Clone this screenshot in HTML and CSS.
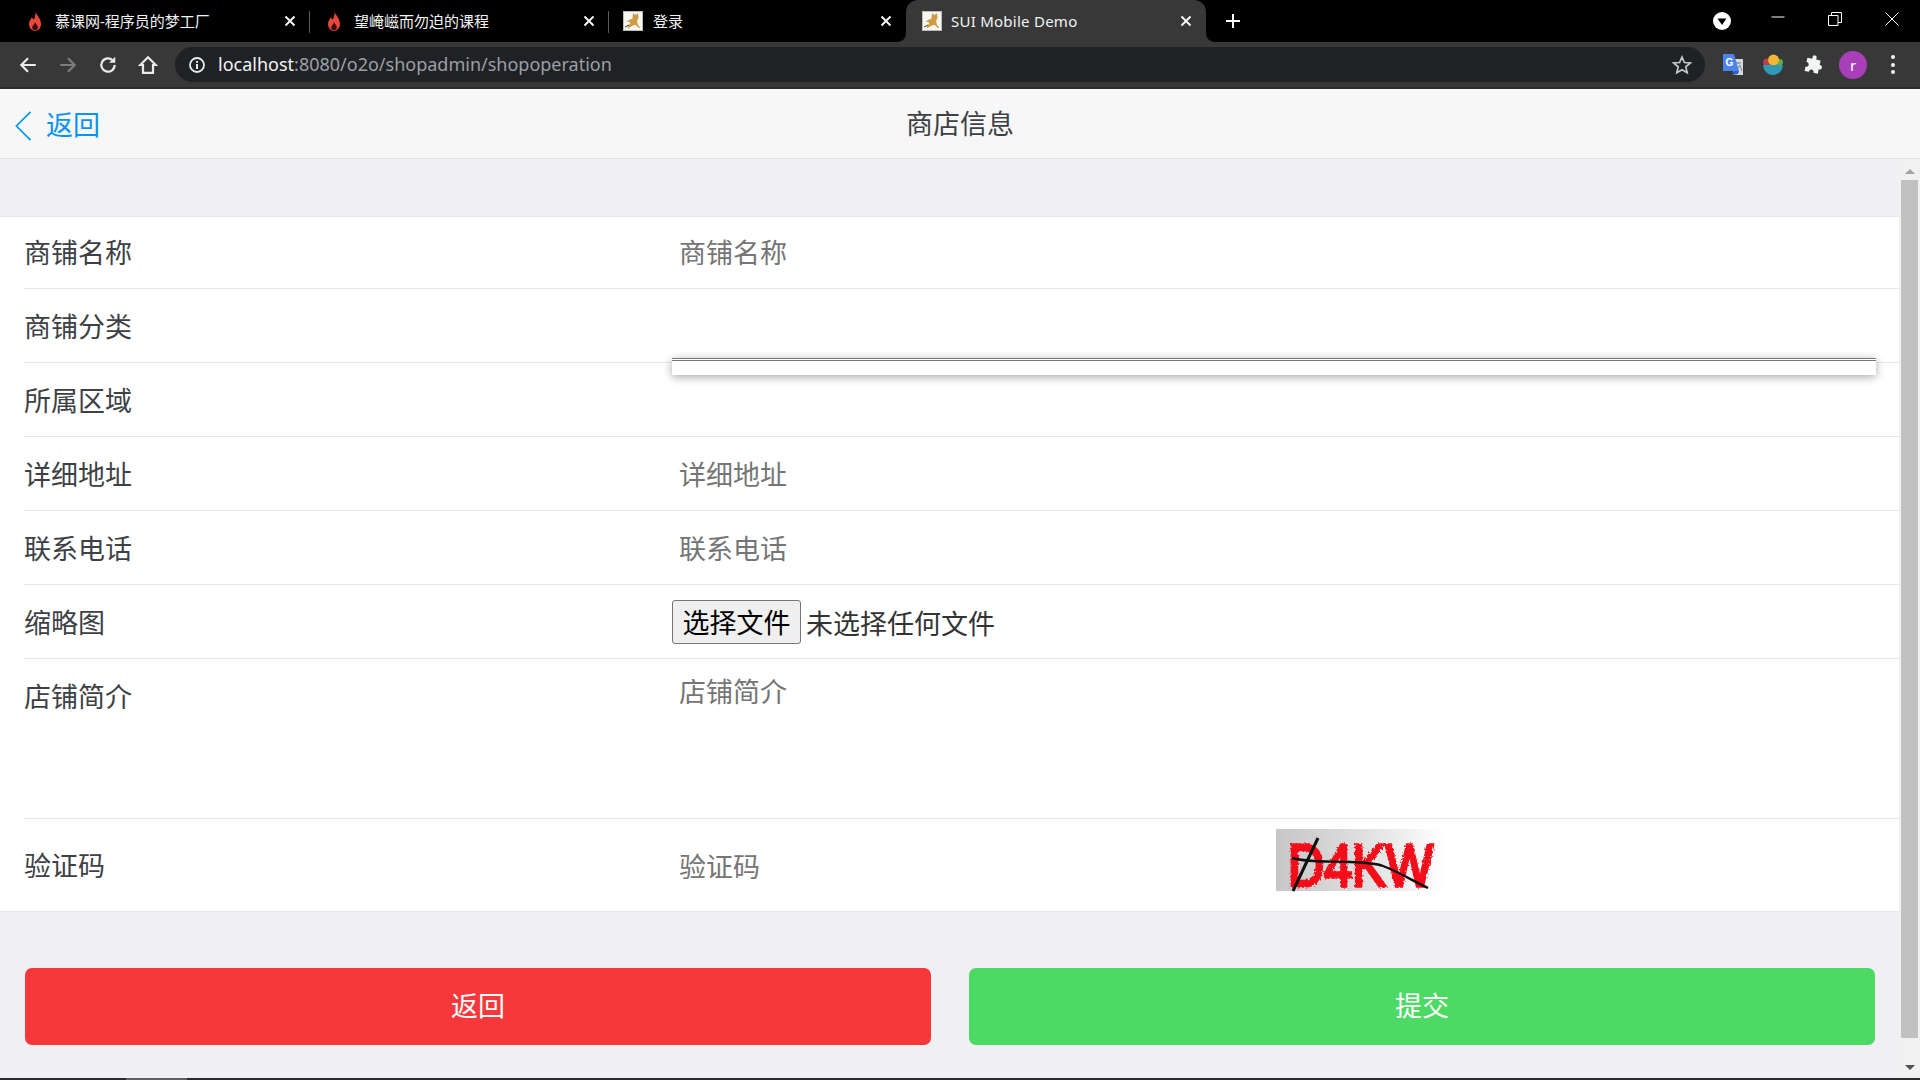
FILE: index.html
```html
<!DOCTYPE html>
<html lang="zh-CN">
<head>
<meta charset="utf-8">
<title>SUI Mobile Demo</title>
<link rel="stylesheet" href="styles.css">
</head>
<body>
<div class="browser-tabs">
  <div class="tab">
    <svg class="fav" viewBox="0 0 12 20"><path d="M6.500 0C7 4 12 7 12 13c0 4-3 7-6 7s-6-3-6-7c0-3 2-5 3-7 .5 1.500 1 2 2 2.500C6 6 7 3 6.500 0z" fill="#e8473d"/><path d="M6 11c1 2 2.800 3.500 2.800 5.500 0 1.500-1.200 2.700-2.800 2.700s-2.800-1.200-2.800-2.700C3.200 14.500 5.500 13.500 6 11z" fill="#3a0d0b"/></svg>
    <span class="tab-title">慕课网-程序员的梦工厂</span>
    <svg class="x" viewBox="0 0 12 12"><path d="M1.500 1.500l9 9M10.500 1.500l-9 9"/></svg>
    <i class="sep"></i>
  </div>
  <div class="tab">
    <svg class="fav" viewBox="0 0 12 20"><path d="M6.500 0C7 4 12 7 12 13c0 4-3 7-6 7s-6-3-6-7c0-3 2-5 3-7 .5 1.500 1 2 2 2.500C6 6 7 3 6.500 0z" fill="#e8473d"/><path d="M6 11c1 2 2.800 3.500 2.800 5.500 0 1.500-1.200 2.700-2.800 2.700s-2.800-1.200-2.800-2.700C3.200 14.500 5.500 13.500 6 11z" fill="#3a0d0b"/></svg>
    <span class="tab-title">望崦嵫而勿迫的课程</span>
    <svg class="x" viewBox="0 0 12 12"><path d="M1.500 1.500l9 9M10.500 1.500l-9 9"/></svg>
    <i class="sep"></i>
  </div>
  <div class="tab tab-login">
    <svg class="cat" viewBox="0 0 20 20"><rect x=".5" y=".5" width="19" height="19" fill="#f7f7f2" stroke="#bbb"/><path d="M10 2l1.500 1.500h2L15 2l.5 5-1.500 3 1 4 2.500 3-2-.3-3-3-3 1-5 3 1-3 2-3c-1-1-2.500-1-4-1 2-1.500 4-3 6-3z" fill="#cf9b45"/><path d="M2 16l4-2M11 6.500h.1M13.500 6.500h.1" stroke="#3a3a3a" fill="none"/></svg>
    <span class="tab-title">登录</span>
    <svg class="x" viewBox="0 0 12 12"><path d="M1.500 1.500l9 9M10.500 1.500l-9 9"/></svg>
  </div>
  <div class="tab tab-active">
    <svg class="cat" viewBox="0 0 20 20"><rect x=".5" y=".5" width="19" height="19" fill="#f7f7f2" stroke="#bbb"/><path d="M10 2l1.500 1.500h2L15 2l.5 5-1.500 3 1 4 2.500 3-2-.3-3-3-3 1-5 3 1-3 2-3c-1-1-2.500-1-4-1 2-1.500 4-3 6-3z" fill="#cf9b45"/><path d="M2 16l4-2M11 6.500h.1M13.500 6.500h.1" stroke="#3a3a3a" fill="none"/></svg>
    <span class="tab-title">SUI Mobile Demo</span>
    <svg class="x" viewBox="0 0 12 12"><path d="M1.500 1.500l9 9M10.500 1.500l-9 9"/></svg>
  </div>
  <svg class="new-tab" viewBox="0 0 16 16"><path d="M8 1v14M1 8h14"/></svg>
  <div class="win">
    <svg class="profile" viewBox="0 0 18 18"><circle cx="9" cy="9" r="9" fill="#fff"/><path d="M4.500 6.500h9L9 13z" fill="#000"/></svg>
    <svg class="win-btn" viewBox="0 0 14 14"><path d="M.5 5h13" stroke="#fff" fill="none"/></svg>
    <svg class="win-btn" viewBox="0 0 14 14"><path d="M.5 3.500h9.500v10H.5zM3.500 3.500V.5h10v10h-3.500" stroke="#fff" fill="none"/></svg>
    <svg class="win-btn" viewBox="0 0 14 14"><path d="M.5.5l13 13M13.500.5l-13 13" stroke="#fff" fill="none"/></svg>
  </div>
</div>

<div class="toolbar">
  <div class="tool"><svg viewBox="0 0 18 18" class="ico"><path d="M16 9H3M9 3L3 9l6 6" stroke="#e8eaed" stroke-width="2" fill="none"/></svg></div>
  <div class="tool"><svg viewBox="0 0 18 18" class="ico"><path d="M2 9h13M9 3l6 6-6 6" stroke="#7c7d7f" stroke-width="2" fill="none"/></svg></div>
  <div class="tool"><svg viewBox="0 0 18 18" class="ico"><path d="M15 9a6 6 0 1 1-1.800-4.300" stroke="#e8eaed" stroke-width="2" fill="none"/><path d="M15.500 1.500v5.500H10z" fill="#e8eaed"/></svg></div>
  <div class="tool"><svg viewBox="0 0 18 18" class="ico"><path d="M9 2L2 9h2.500v7h9V9H16z" stroke="#e8eaed" stroke-width="2" fill="none"/></svg></div>
  <div class="omni">
    <svg class="info" viewBox="0 0 18 18"><circle cx="9" cy="9" r="7" stroke="#e8eaed" stroke-width="1.800" fill="none"/><path d="M9 8v5M9 5v1.800" stroke="#e8eaed" stroke-width="2"/></svg>
    <span class="url"><b class="host">localhost</b>:8080/o2o/shopadmin/shopoperation</span>
    <svg class="star" viewBox="0 0 20 20"><path d="M10 2l2.400 5.500 6 .5-4.600 3.900 1.400 5.900L10 14.700l-5.200 3.100 1.400-5.900L1.600 8l6-.5z" stroke="#c4c6c9" stroke-width="1.700" fill="none"/></svg>
  </div>
  <div class="tool"><svg viewBox="0 0 22 22" class="ext"><path d="M9 5h12v16H12z" fill="#d5d8dc"/><path d="M13 9h6M16 8v2M14 17l4-6 2 6" stroke="#7d8b94" fill="none"/><path d="M1 0h11l5 17H1z" fill="#4a84ec"/><path d="M12 17l-2 4 6-1 1-3z" fill="#2e5fc0"/><text x="3.500" y="12" class="g">G</text></svg></div>
  <div class="tool"><svg viewBox="0 0 20 20" class="ext"><circle cx="4.500" cy="7.500" r="3.500" fill="#b8414a"/><circle cx="16" cy="7.500" r="3" fill="#63ac4c"/><circle cx="10.500" cy="5.500" r="5" fill="#f2b632"/><path d="M1 10h18c0 5-4 9-9 9s-9-4-9-9z" fill="#2f9ab8"/></svg></div>
  <div class="tool"><svg viewBox="0 0 20 20" class="ico"><path d="M8 1.500a2.200 2.200 0 0 1 4 0V4h4.500v4.500a2.300 2.300 0 1 1 0 4.500v4.500H12a2.300 2.300 0 1 0-4.500 0H3V13a2.300 2.300 0 1 0 0-4.500V4h5z" fill="#f1f3f4" transform="rotate(12 10 10)"/></svg></div>
  <div class="tool"><span class="avatar">r</span></div>
  <div class="tool"><span class="kebab"><i></i><i></i><i></i></span></div>
</div>

<header class="nav">
  <a class="nav-back"><svg class="chev" viewBox="0 0 18 32"><path d="M16.500 1L1.500 16l15 15" fill="none" stroke="#0894ec" stroke-width="1.800"/></svg><span>返回</span></a>
  <h1 class="nav-title">商店信息</h1>
</header>

<div class="viewport">
  <main class="content">
    <section class="list">
      <div class="row row-first"><label class="lbl">商铺名称</label><div class="ctl"><span class="ph">商铺名称</span></div></div>
      <div class="row"><label class="lbl">商铺分类</label><div class="ctl"></div></div>
      <div class="row"><label class="lbl">所属区域</label><div class="ctl"></div></div>
      <div class="row"><label class="lbl">详细地址</label><div class="ctl"><span class="ph">详细地址</span></div></div>
      <div class="row"><label class="lbl">联系电话</label><div class="ctl"><span class="ph">联系电话</span></div></div>
      <div class="row"><label class="lbl">缩略图</label><div class="ctl ctl-file"><button class="file-btn" type="button">选择文件</button><span class="file-none">未选择任何文件</span></div></div>
      <div class="row row-area"><label class="lbl">店铺简介</label><div class="ctl"><span class="ph">店铺简介</span></div></div>
      <div class="row row-code"><label class="lbl">验证码</label><div class="ctl ctl-half"><span class="ph">验证码</span></div>
        <svg class="captcha" viewBox="0 0 169 62" preserveAspectRatio="none">
          <defs>
            <linearGradient id="cg" x1="0" x2="1" y1="0" y2="0"><stop offset="0" stop-color="#c6c6c6"/><stop offset=".5" stop-color="#dedede"/><stop offset="1" stop-color="#ffffff"/></linearGradient>
            <filter id="soft" x="-5%" y="-5%" width="110%" height="110%"><feTurbulence type="fractalNoise" baseFrequency=".5" numOctaves="2" seed="4" result="n"/><feDisplacementMap in="SourceGraphic" in2="n" scale="4" result="d"/><feGaussianBlur in="d" stdDeviation=".6"/></filter>
          </defs>
          <rect width="169" height="62" fill="url(#cg)"/>
          <text x="12" y="57" class="cap-text" textLength="145" lengthAdjust="spacingAndGlyphs" filter="url(#soft)">D4KW</text>
          <path d="M42 9L17 62" stroke="#111" stroke-width="3" fill="none"/>
          <path d="M16 29c18 5 40 3 58 4 14 .5 25 1 33 4 16 6 30 15 45 22" stroke="#111" stroke-width="2.400" fill="none"/>
        </svg>
      </div>
      <div class="popover"></div>
    </section>
    <div class="actions">
      <a class="btn btn-red">返回</a>
      <a class="btn btn-green">提交</a>
    </div>
  </main>
  <aside class="scrollbar">
    <i class="arrow arrow-up"></i>
    <div class="thumb"></div>
    <i class="arrow arrow-down"></i>
  </aside>
</div>
<div class="taskbar"><i class="task-a"></i></div>
</body>
</html>
```

FILE: styles.css
```css
* { box-sizing: border-box; }
html, body { margin: 0; padding: 0; height: 100%; overflow: hidden; }
body {
  width: 1920px; height: 1080px; display: flex; flex-direction: column;
  font-family: "Noto Sans CJK SC", "Liberation Sans", sans-serif;
  color: #3d4145; background: #efeff4;
}

/* browser tabs */
.browser-tabs { height: 42px; background: #000; display: flex; align-items: stretch; flex: none; }
.tab { width: 299px; position: relative; display: flex; align-items: center; padding: 0 14px 0 18px; color: #f1f3f4; font-size: 15px; }
.tab:first-child { width: 310px; padding-left: 29px; }
.tab-login { width: 297px; padding-left: 14px; }
.tab-active { background: #383838; width: 300px; border-radius: 12px 12px 0 0; padding-left: 16px; padding-right: 14px; }
.tab-active::before, .tab-active::after { content: ""; position: absolute; bottom: 0; width: 8px; height: 8px; }
.tab-active::before { left: -8px; background: radial-gradient(circle at 0 0, #000 7.500px, #383838 8px); }
.tab-active::after { right: -8px; background: radial-gradient(circle at 100% 0, #000 7.500px, #383838 8px); }
.tab-title { flex: 1; margin: -2px 0 0 14px; white-space: nowrap; font-family: "Noto Sans", "Noto Sans CJK SC", sans-serif; }
.tab-login .tab-title { margin-left: 10px; }
.tab-active .tab-title { margin-left: 9px; margin-top: 0; letter-spacing: .25px; }
.fav { width: 12px; height: 20px; flex: none; }
.cat { width: 20px; height: 20px; flex: none; }
.x { width: 12px; height: 12px; flex: none; stroke: #fff; stroke-width: 1.800; fill: none; }
.sep { position: absolute; right: 0; top: 11px; width: 1px; height: 22px; background: #5b5b5b; }
.new-tab { width: 16px; height: 16px; margin: 13px 0 0 19px; stroke: #fff; stroke-width: 2; fill: none; flex: none; }
.win { margin-left: auto; display: flex; align-items: flex-start; }
.profile { width: 18px; height: 18px; margin: 12px 40px 0 0; }
.win-btn { width: 14px; height: 14px; margin: 12px 43px 0 0; }
.win-btn:last-child { margin-right: 21px; }

/* toolbar */
.toolbar { height: 47px; background: #383838; display: flex; align-items: center; padding: 0 7px 0 8px; flex: none; border-bottom: 2px solid #2b2b2b; }
.tool { width: 40px; height: 40px; display: flex; align-items: center; justify-content: center; flex: none; }
.ico { width: 20px; height: 20px; }
.ext { width: 22px; height: 22px; }
.g { font: 700 10px "Liberation Sans", sans-serif; fill: #fff; }
.omni { flex: 1; height: 35px; margin: 0 8px 0 7px; background: #202124; border-radius: 18px; display: flex; align-items: center; padding: 0 13px; }
.info { width: 18px; height: 18px; flex: none; }
.url { flex: 1; margin: -2px 0 0 12px; font: 400 18px "Noto Sans", sans-serif; color: #9aa0a6; white-space: nowrap; }
.host { font-weight: 400; color: #f1f3f4; }
.star { width: 20px; height: 20px; flex: none; }
.avatar { width: 28px; height: 28px; border-radius: 50%; background: #a83fb8; color: #fff; font: 400 15px "Noto Sans", sans-serif; display: flex; align-items: center; justify-content: center; }
.kebab { display: flex; flex-direction: column; gap: 3.500px; }
.kebab i { width: 4px; height: 4px; border-radius: 50%; background: #f1f3f4; display: block; }

/* page nav */
.nav { height: 70px; background: #f7f7f8; border-bottom: 1px solid #e4e4e6; position: relative; display: flex; align-items: center; justify-content: center; flex: none; padding-bottom: 2px; }
.nav-title { margin: 0; font-size: 27px; font-weight: 400; color: #3d4145; line-height: 1; }
.nav-back { position: absolute; left: 15px; top: 21px; display: flex; align-items: center; gap: 14px; color: #0894ec; font-size: 27px; line-height: 32px; }
.nav-back span { margin-top: -5px; }
.chev { width: 17px; height: 32px; }

/* body */
.viewport { flex: 1; display: flex; min-height: 0; }
.content { flex: 1; padding-top: 57px; background: #efeff4; }
.list { background: #fff; border-top: 1px solid #e7e7e7; border-bottom: 1px solid #e7e7e7; position: relative; padding-left: 24px; }
.row { display: flex; align-items: center; height: 74px; border-bottom: 1px solid #e7e7e7; font-size: 27px; }
.row-first { height: 72px; padding-bottom: 2px; }
.row-area { height: 160px; align-items: flex-start; padding-top: 17px; }
.row-code { height: 92px; border-bottom: 0; }
.lbl { width: 648px; flex: none; color: #3d4145; line-height: 40px; }
.ctl { flex: 1; display: flex; align-items: center; min-height: 40px; padding-left: 7px; }
.ctl-file { padding-left: 0; }
.ctl-half { flex: none; width: 604px; }
.ph { color: #757575; line-height: 36px; }
.row-area .ph { margin-top: -10px; }
.row-code .ph { margin-top: 2px; }
.file-btn { width: 129px; height: 44px; padding: 1px 0 0; font: 400 27px "Noto Sans CJK SC", sans-serif; color: #000; background: #efefef; border: 1px solid #767676; border-radius: 3px; line-height: 40px; }
.file-none { margin: 1px 0 0 5px; color: #333; font-size: 27px; }
.captcha { width: 169px; height: 62px; flex: none; align-self: flex-start; margin-top: 10px; overflow: visible; }
.cap-text { font: 400 60px "Liberation Sans", sans-serif; fill: #f4101a; stroke: #f4101a; stroke-width: 3.500; }
.popover { position: absolute; left: 672px; top: 141px; width: 1204px; height: 17px; background: #fff; box-shadow: 0 2px 10px rgba(0, 0, 0, .35); border-top: 3px double #777; }

.actions { display: flex; gap: 38px; padding: 56px 24px 0 25px; }
.btn { flex: 1; height: 77px; border-radius: 7px; display: flex; align-items: center; justify-content: center; color: #fff; font-size: 27px; padding-bottom: 5px; }
.btn-red { background: #f6383a; }
.btn-green { background: #4cd964; }

/* scrollbar */
.scrollbar { width: 21px; flex: none; background: #f1f1f1; position: relative; padding: 21px 2px 0; }
.thumb { height: 858px; background: #c1c1c1; }
.arrow { position: absolute; left: 6px; width: 0; height: 0; border-left: 5px solid transparent; border-right: 5px solid transparent; }
.arrow-up { top: 10px; border-bottom: 5px solid #a3a3a3; }
.arrow-down { bottom: 8px; border-top: 5px solid #505050; }

.taskbar { height: 2px; background: #2b2b2b; flex: none; position: relative; }
.task-a { position: absolute; left: 126px; top: 0; width: 61px; height: 2px; background: #5f5f5f; }
```
